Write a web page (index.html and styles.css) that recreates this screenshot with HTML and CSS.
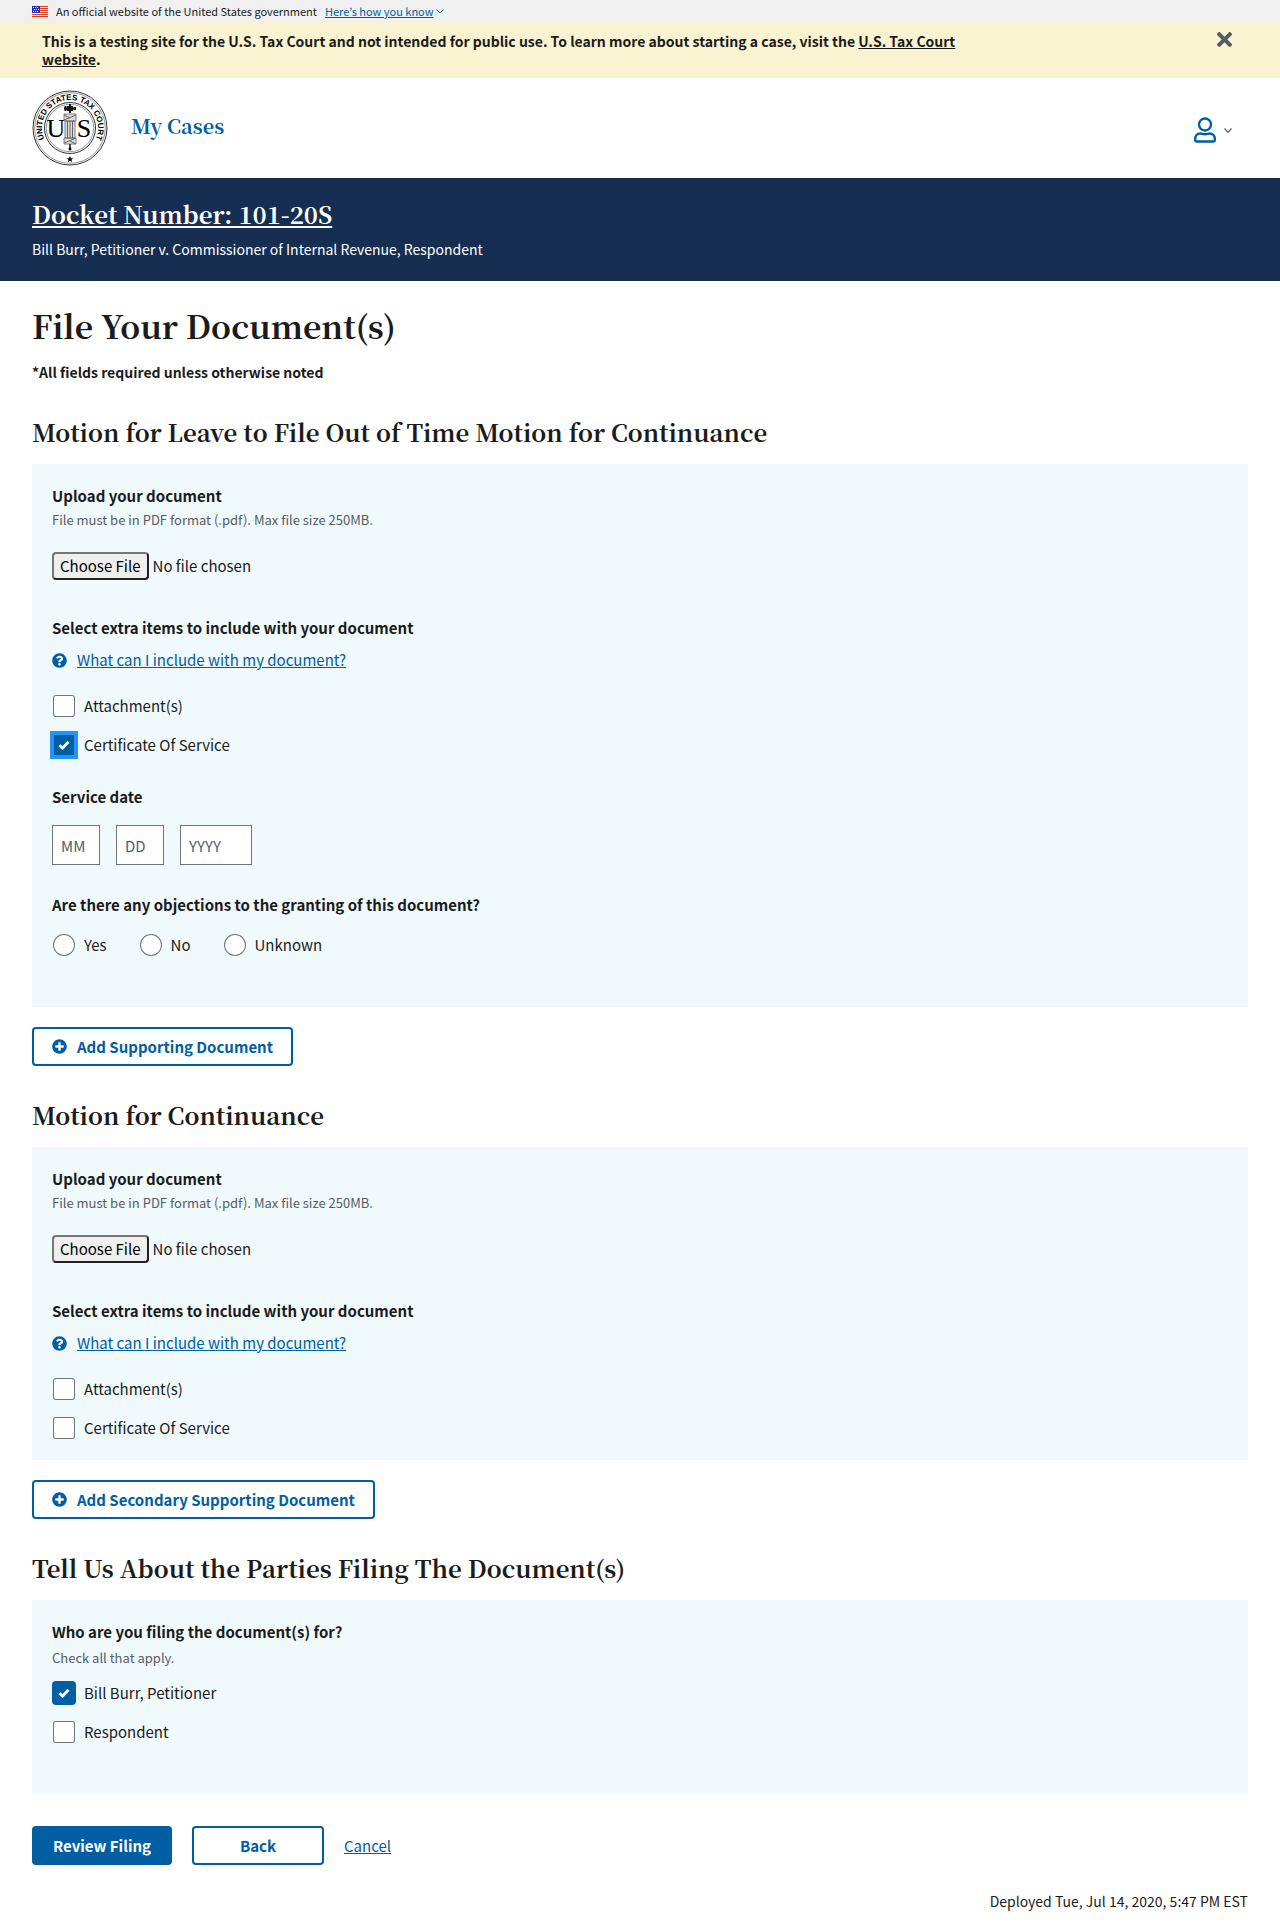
FILE: index.html
```html
<!DOCTYPE html>
<html lang="en">
<head>
<meta charset="utf-8">
<meta name="viewport" content="width=device-width, initial-scale=1">
<title>File Your Document(s)</title>
<link rel="stylesheet" href="styles.css">
</head>
<body>
<svg class="sprite" aria-hidden="true">
  <symbol id="icon-question" viewBox="0 0 512 512"><path d="M504 256c0 137-111 248-248 248S8 393 8 256 119 8 256 8s248 111 248 248zM262.700 90c-54.500 0-89.300 23-116.500 63.800-3.500 5.300-2.400 12.400 2.700 16.300l34.700 26.300c5.200 3.900 12.600 3 16.700-2.100 17.900-22.700 30.100-35.800 57.300-35.800 20.400 0 45.700 13.100 45.700 33 0 15-12.400 22.700-32.500 34C247.100 238.500 216 254.900 216 296v4c0 6.600 5.400 12 12 12h56c6.600 0 12-5.400 12-12v-1.300c0-28.500 83.200-29.600 83.200-106.700 0-58-60.200-102-116.500-102zM256 338c-25.400 0-46 20.600-46 46s20.600 46 46 46 46-20.600 46-46-20.600-46-46-46z"/></symbol>
  <symbol id="icon-plus" viewBox="0 0 512 512"><path d="M256 8C119 8 8 119 8 256s111 248 248 248 248-111 248-248S393 8 256 8zm144 276c0 6.600-5.400 12-12 12h-92v92c0 6.600-5.400 12-12 12h-56c-6.600 0-12-5.400-12-12v-92h-92c-6.600 0-12-5.400-12-12v-56c0-6.600 5.400-12 12-12h92v-92c0-6.600 5.400-12 12-12h56c6.600 0 12 5.400 12 12v92h92c6.600 0 12 5.400 12 12v56z"/></symbol>
</svg>

<div class="gov-banner">
  <svg class="flag" viewBox="0 0 16 11" aria-hidden="true">
    <rect width="16" height="11" fill="#fff"/>
    <path d="M0 .5h16M0 2.500h16M0 4.500h16M0 6.500h16M0 8.500h16M0 10.500h16" stroke="#db3e1f"/>
    <rect width="8" height="7" fill="#1e33b1"/>
    <path d="M1 1.500h1m1 0h1m1 0h1M2 3.500h1m1 0h1m1 0h1M1 5.500h1m1 0h1m1 0h1" stroke="#fff"/>
  </svg>
  <span>An official website of the United States government</span>
  <button type="button" class="banner-button"><span>Here’s how you know</span><svg class="banner-chevron" viewBox="0 0 8 5" aria-hidden="true"><path d="M.5 .8 4 3.800 7.500 .8"/></svg></button>
</div>

<div class="notice">
  <p class="notice-text">This is a testing site for the U.S. Tax Court and not intended for public use. To learn more about starting a case, visit the <a href="#">U.S. Tax Court website</a>.</p>
  <button type="button" class="icon-button" aria-label="Close"><svg class="close" viewBox="0 80 352 352" aria-hidden="true"><path d="M242.720 256l100.070-100.070c12.280-12.280 12.280-32.190 0-44.480l-22.240-22.240c-12.280-12.280-32.190-12.280-44.480 0L176 189.280 75.930 89.210c-12.280-12.280-32.190-12.280-44.480 0L9.210 111.450c-12.280 12.280-12.280 32.190 0 44.480L109.280 256 9.210 356.070c-12.280 12.280-12.280 32.190 0 44.480l22.240 22.240c12.280 12.280 32.200 12.280 44.480 0L176 322.720l100.070 100.070c12.280 12.280 32.200 12.280 44.480 0l22.240-22.240c12.280-12.280 12.280-32.190 0-44.480L242.720 256z"/></svg></button>
</div>

<header class="site-header">
  <a href="#" class="seal-link" aria-label="United States Tax Court">
    <svg class="seal" viewBox="0 0 76 76" aria-hidden="true">
      <defs><path id="seal-arc" d="M17 56.500A28 28 0 1 1 59 56.500"/></defs>
      <g fill="none" stroke="#333">
        <circle cx="38" cy="38" r="37" stroke-width="1"/>
        <circle cx="38" cy="38" r="35.300" stroke-width=".5"/>
        <circle cx="38" cy="38" r="25.500" stroke-width="1"/>
        <circle cx="38" cy="38" r="23.700" stroke-width=".5"/>
      </g>
      <text class="seal-ring"><textPath href="#seal-arc" startOffset="50%" text-anchor="middle">UNITED STATES TAX COURT</textPath></text>
      <text class="seal-letter" x="24" y="47" text-anchor="middle">U</text>
      <text class="seal-letter" x="52" y="47" text-anchor="middle">S</text>
      <path d="M38 14v9M32 18.500h12M33.500 16v5M36 16v5M40 16v5M43 17v3" stroke="#111" stroke-width="2" fill="none"/>
      <path d="M32 24h12v7H32zM33 31h10v17H33zM32 48h12v6H32z" fill="#ddd" stroke="#666" stroke-width=".8"/>
      <path d="M35.500 31v17M38 31v17M40.500 31v17M32 30l12-5M32 53l12-5M32 25l6 3M38 51l6 3" stroke="#555" stroke-width=".9" fill="none"/>
      <path d="M38 54v6" stroke="#111" stroke-width="1.500"/><circle cx="38" cy="59" r="1.500"/>
      <path d="M38 66l.9 2.200h2.500l-2 1.500.8 2.500-2.200-1.500-2.200 1.500.8-2.500-2-1.500h2.500z"/>
    </svg>
  </a>
  <nav class="site-nav"><a href="#">My Cases</a></nav>
  <button type="button" class="account" aria-label="Account">
    <svg class="user" viewBox="0 0 22 26" aria-hidden="true"><circle cx="11" cy="7.500" r="6"/><path d="M6.500 16.500C3 16.500 1.200 19 1.200 21.500v1.800c0 .7.500 1.200 1.200 1.200h17.200c.7 0 1.200-.5 1.200-1.200v-1.800c0-2.500-1.800-5-5.300-5-1.500 0-2.500.7-4.500.7s-3-.7-4.500-.7z"/></svg>
    <svg class="chevron" viewBox="0 0 8 5" aria-hidden="true"><path d="M.5 .5 4 4.200 7.500 .5"/></svg>
  </button>
</header>

<div class="case-bar">
  <p class="docket"><a href="#">Docket Number: 101-20S</a></p>
  <p class="caption">Bill Burr, Petitioner v. Commissioner of Internal Revenue, Respondent</p>
</div>

<main class="page">
  <h1>File Your Document(s)</h1>
  <p class="required">*All fields required unless otherwise noted</p>

  <h2>Motion for Leave to File Out of Time Motion for Continuance</h2>
  <section class="card card-tall">
    <label class="label" for="file-1">Upload your document</label>
    <p class="hint">File must be in PDF format (.pdf). Max file size 250MB.</p>
    <input type="file" class="file" id="file-1">
    <fieldset class="group">
      <legend class="label">Select extra items to include with your document</legend>
      <a href="#" class="help"><svg class="icon" aria-hidden="true"><use href="#icon-question"/></svg><span>What can I include with my document?</span></a>
      <div class="options">
        <div class="option"><input type="checkbox" id="attach-1"><label for="attach-1">Attachment(s)</label></div>
        <div class="option"><input type="checkbox" class="is-focused" id="cert-1" checked><label for="cert-1">Certificate Of Service</label></div>
      </div>
    </fieldset>
    <fieldset class="group group-date">
      <legend class="label">Service date</legend>
      <div class="date">
        <input type="text" aria-label="Month" placeholder="MM" maxlength="2">
        <input type="text" aria-label="Day" placeholder="DD" maxlength="2">
        <input type="text" class="year" aria-label="Year" placeholder="YYYY" maxlength="4">
      </div>
    </fieldset>
    <fieldset class="group group-radio">
      <legend class="label">Are there any objections to the granting of this document?</legend>
      <div class="radios">
        <div class="option"><input type="radio" name="objections" id="obj-yes"><label for="obj-yes">Yes</label></div>
        <div class="option"><input type="radio" name="objections" id="obj-no"><label for="obj-no">No</label></div>
        <div class="option"><input type="radio" name="objections" id="obj-unknown"><label for="obj-unknown">Unknown</label></div>
      </div>
    </fieldset>
  </section>
  <button type="button" class="button outline"><svg class="icon" aria-hidden="true"><use href="#icon-plus"/></svg><span>Add Supporting Document</span></button>

  <h2>Motion for Continuance</h2>
  <section class="card">
    <label class="label" for="file-2">Upload your document</label>
    <p class="hint">File must be in PDF format (.pdf). Max file size 250MB.</p>
    <input type="file" class="file" id="file-2">
    <fieldset class="group">
      <legend class="label">Select extra items to include with your document</legend>
      <a href="#" class="help"><svg class="icon" aria-hidden="true"><use href="#icon-question"/></svg><span>What can I include with my document?</span></a>
      <div class="options">
        <div class="option"><input type="checkbox" id="attach-2"><label for="attach-2">Attachment(s)</label></div>
        <div class="option"><input type="checkbox" id="cert-2"><label for="cert-2">Certificate Of Service</label></div>
      </div>
    </fieldset>
  </section>
  <button type="button" class="button outline"><svg class="icon" aria-hidden="true"><use href="#icon-plus"/></svg><span>Add Secondary Supporting Document</span></button>

  <h2>Tell Us About the Parties Filing The Document(s)</h2>
  <section class="card card-tall">
    <fieldset class="parties">
      <legend class="label">Who are you filing the document(s) for?</legend>
      <p class="hint">Check all that apply.</p>
      <div class="options">
        <div class="option"><input type="checkbox" id="petitioner" checked><label for="petitioner">Bill Burr, Petitioner</label></div>
        <div class="option"><input type="checkbox" id="respondent"><label for="respondent">Respondent</label></div>
      </div>
    </fieldset>
  </section>

  <div class="actions">
    <button type="submit" class="button review">Review Filing</button>
    <button type="button" class="button outline back">Back</button>
    <a href="#">Cancel</a>
  </div>
</main>

<footer class="footer">Deployed Tue, Jul 14, 2020, 5:47 PM EST</footer>
</body>
</html>
```
FILE: styles.css
```css
:root {
  --sans: "Source Sans Pro", "Noto Sans CJK JP", "Noto Sans", sans-serif;
  --serif: "Source Serif Pro", "Noto Serif CJK JP", "Liberation Serif", serif;
  --ink: #1b1b1b;
  --blue: #005ea2;
  --muted: #565c65;
  --rule: #71767a;
}

* {
  box-sizing: border-box;
}

body {
  margin: 0;
  background: #fff;
  color: var(--ink);
  font: 15px/24px var(--sans);
}

h1, h2, p, fieldset, legend {
  margin: 0;
  padding: 0;
  border: 0;
}

a {
  color: var(--blue);
}

button, input {
  font: inherit;
}

button {
  cursor: pointer;
}

.sprite {
  display: none;
}

/* Government banner */
.gov-banner {
  display: flex;
  align-items: center;
  gap: 8px;
  padding: 0 32px;
  background: #f0f0f0;
  font-size: 11px;
  line-height: 22px;
}

.flag {
  width: 16px;
  height: 11px;
}

.banner-button {
  display: flex;
  align-items: center;
  gap: 2px;
  padding: 0;
  border: 0;
  background: none;
  color: var(--blue);
}

.banner-button span {
  text-decoration: underline;
}

.banner-chevron {
  width: 8px;
  height: 5px;
  fill: none;
  stroke: var(--blue);
}

/* Testing-site notice */
.notice {
  display: flex;
  justify-content: space-between;
  align-items: flex-start;
  padding: 10px 48px 10px 42px;
  background: #faf3d1;
}

.notice-text {
  max-width: 80%;
  font-size: 14px;
  font-weight: 700;
  line-height: 18px;
}

.notice a {
  color: inherit;
}

.icon-button {
  padding: 0;
  border: 0;
  background: none;
  line-height: 0;
}

.close {
  width: 15px;
  height: 15px;
  fill: var(--muted);
}

/* Header */
.site-header {
  display: flex;
  align-items: center;
  padding: 12px 48px 12px 32px;
}

.seal-link {
  line-height: 0;
}

.seal {
  width: 76px;
  height: 76px;
}

.seal-ring {
  font: 700 8px "Liberation Sans", sans-serif;
}

.seal-letter {
  font: 26px "Liberation Serif", serif;
}

.site-nav {
  flex: 1;
  padding: 0 0 4px 23px;
  font: 700 20px/32px var(--serif);
}

.site-nav a {
  text-decoration: none;
}

.account {
  display: flex;
  align-items: center;
  gap: 8px;
  padding: 4px 0 0;
  border: 0;
  background: none;
}

.user {
  width: 22px;
  height: 26px;
  fill: none;
  stroke: var(--blue);
  stroke-width: 2.400;
}

.chevron {
  width: 8px;
  height: 5px;
  fill: none;
  stroke: var(--muted);
  stroke-width: 1.200;
}

/* Case summary */
.case-bar {
  padding: 20px 32px;
  background: #162e51;
  color: #fff;
}

.docket {
  margin-bottom: 8px;
  font: 700 24px/32px var(--serif);
}

.docket a {
  color: inherit;
}

.caption {
  font-size: 14px;
  line-height: 23px;
}

/* Form page */
.page {
  padding: 24px 32px 0;
}

h1 {
  margin-bottom: 16px;
  font: 700 32px/40px var(--serif);
}

.required {
  font-size: 14px;
  font-weight: 700;
  line-height: 22px;
}

h2 {
  margin: 32px 0 16px;
  font: 700 24px/33px var(--serif);
}

.card {
  margin-bottom: 20px;
  padding: 20px;
  background: #f0f9fc;
}

.card-tall {
  padding-bottom: 50px;
}

.label {
  display: block;
  font-weight: 700;
}

.hint {
  color: var(--muted);
  font-size: 13px;
}

.file {
  display: block;
  width: 100%;
  margin: 20px 0 36px;
  line-height: 24px;
}

.file::file-selector-button {
  margin: 0 4px 0 0;
  padding: 0 6px;
  border: 2px outset #767676;
  border-radius: 4px;
  background: #efefef;
  color: #000;
  font: inherit;
}

.help {
  display: flex;
  align-items: center;
  gap: 10px;
  width: fit-content;
  margin-top: 8px;
}

.icon {
  width: 15px;
  height: 15px;
  fill: currentColor;
}

.options {
  display: grid;
  gap: 15px;
  margin-top: 22px;
}

.option {
  display: flex;
  align-items: center;
}

.option input {
  appearance: none;
  width: 20px;
  height: 20px;
  margin: 2px 10px 2px 2px;
  border-radius: 2px;
  background: #fff;
  box-shadow: 0 0 0 1px var(--rule);
}

.option input[type="radio"] {
  border-radius: 50%;
}

.option input:checked {
  background: var(--blue) url("data:image/svg+xml,%3Csvg xmlns='http://www.w3.org/2000/svg' viewBox='0 0 12 10'%3E%3Cpath d='M1.500 5.200l3 3 6-6.500' fill='none' stroke='%23fff' stroke-width='2.800'/%3E%3C/svg%3E") center / 12px 10px no-repeat;
  box-shadow: 0 0 0 2px var(--blue);
}

.option input.is-focused {
  border-radius: 0;
  outline: 4px solid #2491ff;
}

.group-date,
.group-radio {
  margin-top: 28px;
}

.date {
  display: flex;
  gap: 16px;
  margin-top: 16px;
}

.date input {
  width: 48px;
  height: 40px;
  padding: 0 8px;
  border: 1px solid var(--rule);
  border-radius: 0;
  background: #fff;
}

.date .year {
  width: 72px;
}

.date input::placeholder {
  color: var(--muted);
  opacity: 1;
}

.radios {
  display: flex;
  gap: 32px;
  margin-top: 16px;
}

.parties .hint {
  margin-top: 2px;
}

.parties .options {
  margin-top: 11px;
}

.button {
  display: flex;
  align-items: center;
  justify-content: center;
  gap: 10px;
  width: fit-content;
  height: 39px;
  padding: 0 20px;
  border: 0;
  border-radius: 4px;
  background: var(--blue);
  color: #fff;
  font-weight: 700;
}

.outline {
  border: 2px solid var(--blue);
  padding: 0 18px;
  background: #fff;
  color: var(--blue);
}

.actions {
  display: flex;
  align-items: center;
  gap: 20px;
  margin-top: 32px;
}

.review {
  min-width: 140px;
}

.back {
  min-width: 132px;
}

.footer {
  padding: 24px 32px 16px;
  font-size: 14px;
  text-align: right;
}
```
